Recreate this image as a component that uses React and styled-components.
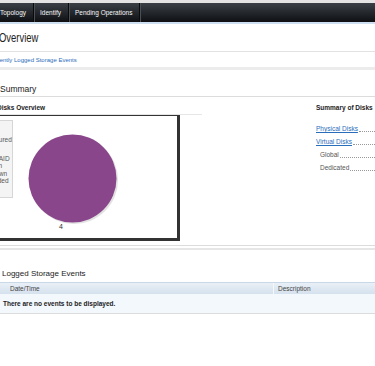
import styled, { createGlobalStyle } from "styled-components";

const Global = createGlobalStyle`
  html, body {
    margin: 0;
    padding: 0;
    background: #fff;
  }
  body {
    font-family: "Liberation Sans", Arial, sans-serif;
    color: #333;
    overflow: hidden;
  }
`;

const Page = styled.div`
  width: 375px;
  height: 366px;
  overflow: hidden;
  background: #fff;
`;

const TopStrip = styled.div`
  height: 3px;
  background: #e4e4e4;
`;

const NavBar = styled.div`
  display: flex;
  height: 19px;
  background: linear-gradient(#3b4047, #24282d 50%, #0e1012);
  border-bottom: 2px solid #cddff0;
`;

const NavItem = styled.div`
  display: flex;
  align-items: center;
  padding: 0 6.5px;
  margin-left: ${(p) => p.$shift || 0}px;
  color: #f6f6f6;
  font-size: 6.5px;
  border-right: 1px solid #0a0a0a;
  box-shadow: 1px 0 0 #4a4f56;
`;

const TitleRow = styled.div`
  height: 27px;
  display: flex;
  align-items: center;
  border-bottom: 1px solid #e2e2e2;
`;

const Title = styled.h1`
  margin: 0 0 0 -1px;
  font-size: 13.5px;
  font-weight: normal;
  color: #222;
  transform: scaleX(0.7);
  transform-origin: left center;
`;

const LinkRow = styled.div`
  height: 15px;
  display: flex;
  align-items: center;
  border-bottom: 3px solid #ececec;
`;

const Link = styled.a`
  color: #2a6ebb;
  font-size: ${(p) => p.$size || 6.5}px;
  margin-left: ${(p) => p.$shift || 0}px;
  text-decoration: ${(p) => (p.$underline ? "underline" : "none")};
`;

const SectionHead = styled.div`
  height: ${(p) => p.$h}px;
  display: flex;
  align-items: flex-end;
  padding-bottom: ${(p) => p.$pb}px;
  box-sizing: border-box;
  font-size: ${(p) => p.$size}px;
  color: #222;
  padding-left: ${(p) => p.$pad || 0}px;
  border-bottom: ${(p) => (p.$rule ? "1px solid #dcdcdc" : "none")};
`;

const Columns = styled.div`
  display: flex;
  justify-content: space-between;
  box-sizing: border-box;
  padding-top: 7px;
  height: 149px;
  border-bottom: 1px solid #dcdcdc;
`;

const LeftCol = styled.div`
  width: 202px;
  display: flex;
  flex-direction: column;
`;

const PanelTitle = styled.div`
  font-size: 6.5px;
  line-height: 8px;
  font-weight: bold;
  color: #222;
  margin-left: ${(p) => p.$shift || 0}px;
  padding-bottom: 2px;
  border-bottom: ${(p) => (p.$rule ? "1px solid #e6e6e6" : "1px solid transparent")};
`;

const ChartBox = styled.div`
  margin-left: -10px;
  width: 186px;
  height: 122px;
  border: 1px solid #333;
  border-right-width: 3px;
  border-bottom-width: 3px;
  display: flex;
  align-items: flex-start;
  overflow: hidden;
`;

const Legend = styled.div`
  margin-top: 4px;
  margin-left: -15px;
  width: 37px;
  padding: 0 0 0 3px;
  box-sizing: border-box;
  height: 78px;
  background: #f4f4f4;
  border: 1px solid #d6d6d6;
  display: flex;
  flex-direction: column;
  overflow: hidden;
`;

const LegendItem = styled.div`
  font-size: 6.5px;
  line-height: 7.5px;
  height: ${(p) => (p.children ? 7.5 : 11)}px;
  color: #555;
  white-space: nowrap;
`;

const PieWrap = styled.div`
  margin-left: 14px;
  margin-top: 17px;
`;

const RightCol = styled.div`
  width: 59px;
  display: flex;
  flex-direction: column;
`;

const DiskList = styled.div`
  display: flex;
  flex-direction: column;
  margin-top: 7px;
`;

const DiskRow = styled.div`
  height: 13px;
  display: flex;
  align-items: center;
  padding-left: ${(p) => (p.$sub ? 4 : 0)}px;
  font-size: 6.5px;
  color: #555;
  white-space: nowrap;
  &::after {
    content: "";
    flex: 1;
    margin-left: 1px;
    margin-top: 5px;
    border-bottom: 1px dotted #999;
  }
`;

const BottomBar = styled.div`
  height: 2px;
  margin-top: 2px;
  background: #e6e6e6;
`;

const Table = styled.div`
  display: flex;
  flex-direction: column;
  border-bottom: 1px solid #dcdcdc;
`;

const HeadRow = styled.div`
  height: 11px;
  display: flex;
  background: linear-gradient(#e9f0f7, #d5e1ed);
  border-top: 1px solid #c9d8e6;
`;

const HeadCell = styled.div`
  width: ${(p) => (p.$w ? p.$w + "px" : "auto")};
  flex: ${(p) => (p.$w ? "none" : 1)};
  display: flex;
  align-items: center;
  padding-left: ${(p) => p.$pad}px;
  box-sizing: border-box;
  font-size: 6.5px;
  color: #444;
  border-right: ${(p) => (p.$w ? "1px solid #f4f8fb" : "none")};
`;

const BodyRow = styled.div`
  height: 19px;
  display: flex;
  align-items: center;
  padding-left: 3px;
  background: #f3f8fc;
  font-size: 6.5px;
  font-weight: bold;
  color: #222;
`;

const legend = ["Rea ·", "Onl ·", "Configured", "", "Non-RAID", "Foreign", "Unknown", "Degraded", "Rea ·"];

export default function App() {
  return (
    <Page>
      <Global />
      <TopStrip />
      <NavBar>
        <NavItem $shift={-6.5}>Topology</NavItem>
        <NavItem>Identify</NavItem>
        <NavItem>Pending Operations</NavItem>
      </NavBar>
      <TitleRow>
        <Title>Overview</Title>
      </TitleRow>
      <LinkRow>
        <Link $size={6} $shift={-11}>Recently Logged Storage Events</Link>
      </LinkRow>
      <SectionHead $h={27} $pb={2} $size={8.5} $rule>Summary</SectionHead>
      <Columns>
        <LeftCol>
          <PanelTitle $shift={-3} $rule>Disks Overview</PanelTitle>
          <ChartBox>
            <Legend>
              {legend.map((l, i) => (
                <LegendItem key={i}>{l}</LegendItem>
              ))}
            </Legend>
            <PieWrap>
              <svg width="100" height="110" viewBox="0 0 100 110">
                <circle cx="47" cy="47" r="44" fill="#e2e2e2" />
                <circle cx="45.5" cy="45.5" r="44" fill="#8a468b" />
                <text x="32" y="96" fontSize="7" fill="#333" fontFamily="Liberation Sans, sans-serif">4</text>
              </svg>
            </PieWrap>
          </ChartBox>
        </LeftCol>
        <RightCol>
          <PanelTitle>Summary of Disks</PanelTitle>
          <DiskList>
            <DiskRow><Link $underline>Physical Disks</Link></DiskRow>
            <DiskRow><Link $underline>Virtual Disks</Link></DiskRow>
            <DiskRow $sub>Global</DiskRow>
            <DiskRow $sub>Dedicated</DiskRow>
          </DiskList>
        </RightCol>
      </Columns>
      <BottomBar />
      <SectionHead $h={32} $pb={4} $size={8} $pad={2}>Logged Storage Events</SectionHead>
      <Table>
        <HeadRow>
          <HeadCell $w={274} $pad={10}>Date/Time</HeadCell>
          <HeadCell $pad={4}>Description</HeadCell>
        </HeadRow>
        <BodyRow>There are no events to be displayed.</BodyRow>
      </Table>
    </Page>
  );
}
